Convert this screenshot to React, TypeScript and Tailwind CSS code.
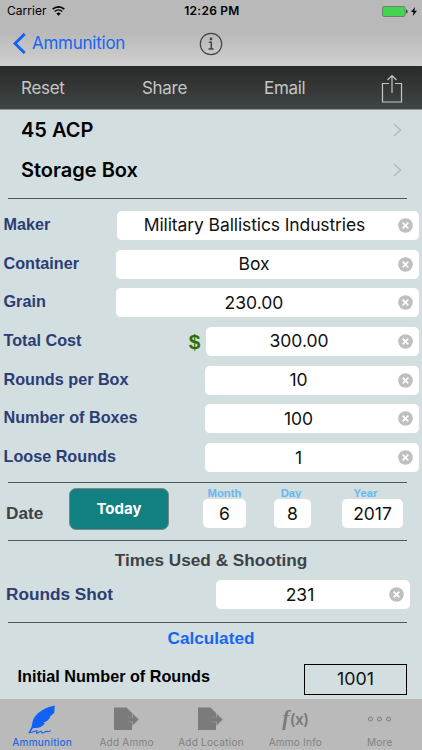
import type { ReactNode } from "react";

interface Field {
  label: string;
  value: string;
  fieldClass: string;
  money?: boolean;
}

const fields: Field[] = [
  {
    label: "Maker",
    value: "Military Ballistics Industries",
    fieldClass: "w-[304px] tracking-[-0.11px]",
  },
  { label: "Container", value: "Box", fieldClass: "w-[305px]" },
  { label: "Grain", value: "230.00", fieldClass: "w-[305px]" },
  {
    label: "Total Cost",
    value: "300.00",
    fieldClass: "w-[215px]",
    money: true,
  },
  { label: "Rounds per Box", value: "10", fieldClass: "w-[216px]" },
  { label: "Number of Boxes", value: "100", fieldClass: "w-[216px]" },
  { label: "Loose Rounds", value: "1", fieldClass: "w-[216px]" },
];

const dateParts = [
  { label: "Month", value: "6", boxClass: "w-[45px]", labelClass: "" },
  { label: "Day", value: "8", boxClass: "w-[39px]", labelClass: "pr-[3px]" },
  {
    label: "Year",
    value: "2017",
    boxClass: "ml-[3px] w-[63px]",
    labelClass: "pr-[11px]",
  },
];

const Divider = () => <div className="ml-2 h-px w-[399px] bg-[#50585b]" />;

const ClearIcon = () => (
  <svg width="15" height="15" viewBox="0 0 15 15" className="shrink-0">
    <circle cx="7.5" cy="7.5" r="7.3" fill="#bfbfc1" />
    <path d="M4.7 4.7l5.6 5.6M10.3 4.7l-5.6 5.6" stroke="#fff" strokeWidth="1.7" />
  </svg>
);

const TextField = ({
  value,
  className,
}: {
  value: string;
  className: string;
}) => (
  <div
    className={`flex h-[31px] shrink-0 items-center rounded-[6px] border border-[#d6dee0] bg-white pr-[6px] font-['Inter',sans-serif] text-[17.5px] text-[#111] ${className}`}
  >
    <span className="flex-1 whitespace-nowrap pr-[5px] text-center">
      {value}
    </span>
    <ClearIcon />
  </div>
);

const ListRow = ({ title }: { title: string }) => (
  <div className="flex h-10 items-center justify-between pl-[21px] pr-5">
    <span className="font-['Inter',sans-serif] text-[20px] font-semibold text-black">
      {title}
    </span>
    <svg width="9" height="14" viewBox="0 0 9 14" fill="none">
      <path d="M1 1l6.5 6L1 13" stroke="#b5babd" strokeWidth="1.6" />
    </svg>
  </div>
);

const ExportIcon = () => (
  <svg width="26" height="24" viewBox="0 0 26 24" fill="#7b7b7b">
    <path d="M0 .5h12.500l5.500 5.500v17H0z" />
    <path
      d="M13.500 10.200h5V6.500l6.300 6-6.300 6v-3.700h-5"
      stroke="#9b9b9b"
      strokeWidth="0.6"
    />
  </svg>
);

const QuillIcon = () => (
  <svg width="28" height="29" viewBox="0 0 28 29">
    <path
      d="M26.700.5C19 2 12 5.500 7.500 11 4 15 4.500 19 3.500 22L.3 28h1.400L5.200 23c5 .3 9-.8 11.800-5l-1.800-.3c3.500-1 5.500-3 7.500-6l-1.500-.3c2.500-1 4-2.300 5.200-4.200z"
      fill="#0f62f5"
    />
    <path
      d="M1 28c3.500-.2 7-3 8-2.200.8.900-1.500 2.400-.2 2.500 1.800 0 3-2.300 4.300-2 1 .3 0 1.700 1.500 1.700 1.600 0 2.600-1.800 4-1.600 1.200.2 2 .7 4.400-.8"
      fill="none"
      stroke="#0f62f5"
      strokeWidth="1.1"
    />
  </svg>
);

const Tab = ({
  label,
  icon,
  active = false,
}: {
  label: string;
  icon: ReactNode;
  active?: boolean;
}) => (
  <div
    className={`flex w-[84.4px] flex-col items-center font-['Inter',sans-serif] text-[10px] tracking-[0.25px] ${
      active ? "font-medium text-[#2467df]" : "text-[#818181]"
    }`}
  >
    <div className="flex h-[37px] items-center pt-[3px]">{icon}</div>
    <span className="whitespace-nowrap leading-[13px]">{label}</span>
  </div>
);

const App = () => {
  return (
    <div className="flex h-[750px] w-[422px] flex-col overflow-hidden bg-[#d2dee0] font-['Liberation_Sans',Arial,sans-serif]">
      <header className="h-[66px] shrink-0 bg-linear-to-b from-[#b9b9b9] from-50% to-[#d0d0d0] font-['Inter',sans-serif]">
        <div className="grid h-[22px] grid-cols-3 items-center pl-[7px] pr-[5px] text-[12px] text-black">
          <div className="flex items-center gap-[5px]">
            <span className="tracking-[0.05px]">Carrier</span>
            <svg width="13" height="10" viewBox="0 0 13 10" fill="none" stroke="#000">
              <path d="M.7 3.200a8.400 8.400 0 0 1 11.600 0" strokeWidth="1.7" />
              <path d="M2.800 5.500a5.400 5.400 0 0 1 7.400 0" strokeWidth="1.600" />
              <path d="M6.500 9.800L4.300 7.500a3.200 3.200 0 0 1 4.400 0z" fill="#000" stroke="none" />
            </svg>
          </div>
          <span className="whitespace-nowrap text-center font-semibold tracking-[0.25px]">
            12:26 PM
          </span>
          <div className="flex items-center justify-end gap-[3px]">
            <svg width="26" height="11" viewBox="0 0 26 11">
              <rect x=".5" y=".5" width="22.500" height="10" rx="1.500" fill="#43d551" stroke="#6f7f70" />
              <path d="M24 3.500c2 .5 2 3.500 0 4z" fill="#333" />
            </svg>
            <svg width="6" height="9" viewBox="0 0 6 9">
              <path d="M4 0L0 5h2.500L1.700 9 6 3.700H3.300z" />
            </svg>
          </div>
        </div>
        <div className="grid h-[43px] grid-cols-3 items-center px-[13px]">
          <div className="flex items-center gap-[6px]">
            <svg width="13" height="21" viewBox="0 0 13 21" fill="none">
              <path d="M11.700 1L2 10.500l9.700 9.500" stroke="#0f62f5" strokeWidth="2.900" />
            </svg>
            <span className="text-[17px] tracking-[-0.25px] text-[#1767ee]">
              Ammunition
            </span>
          </div>
          <svg width="24" height="24" viewBox="0 0 24 24" fill="none" className="justify-self-center">
            <circle cx="12" cy="12" r="10.700" stroke="#444" strokeWidth="1.200" />
            <circle cx="12" cy="7" r="1.400" fill="#444" />
            <path d="M9.800 10.300h2.500v6.500M9.500 17h5.200" stroke="#444" strokeWidth="1.500" />
          </svg>
        </div>
      </header>

      <div className="flex h-[44px] shrink-0 items-center border-b border-[#8b9294] bg-linear-to-b from-[#292a2a] to-[#414545] pt-[2px] font-['Inter',sans-serif] text-[17px] tracking-[-0.3px] text-[#c4c6c6]">
        <span className="w-[121px] pl-[21px]">Reset</span>
        <span className="w-[122px] pl-[21px]">Share</span>
        <span className="w-[138px] pl-[21px]">Email</span>
        <svg width="22" height="30" viewBox="0 0 22 30" fill="none" stroke="#c4c6c6" strokeWidth="1.200">
          <path d="M8 9.500H1.500v18.500h19V9.500H14M11 19V2M6.500 6L11 1.500 15.500 6" />
        </svg>
      </div>

      <main className="h-[589px] shrink-0">
        <ListRow title="45 ACP" />
        <ListRow title="Storage Box" />
        <div className="pt-2">
          <Divider />
        </div>

        <div className="flex flex-col gap-[7.700px] pt-[11px]">
          {fields.map((field) => (
            <div
              key={field.label}
              className="flex h-[31px] items-center justify-between pl-[3.500px] pr-[2.500px]"
            >
              <span className="pb-[3px] text-[16.200px] font-bold text-[#2b3d74]">
                {field.label}
              </span>
              <div className="flex items-center gap-1">
                {field.money && (
                  <span className="text-[21px] font-bold leading-none text-[#2c7005]">
                    $
                  </span>
                )}
                <TextField value={field.value} className={field.fieldClass} />
              </div>
            </div>
          ))}
        </div>

        <div className="pt-[9px]">
          <Divider />
        </div>
        <div className="flex h-[57px] items-start pl-[6px]">
          <span className="w-[63px] pt-[18px] text-[17.200px] font-bold text-[#3f4244]">
            Date
          </span>
          <button className="mt-[5px] h-[42px] w-[100px] rounded-[7px] border-[1.500px] border-[#79898b] bg-[#128080] font-['Inter',sans-serif] text-[15px] font-bold text-white">
            Today
          </button>
          <div className="ml-[33px] flex gap-[26px] pt-[5px]">
            {dateParts.map((part) => (
              <div key={part.label} className="flex flex-col items-center">
                <span
                  className={`h-[10px] text-[11.300px] font-bold leading-[10px] text-[#69b8ee] ${part.labelClass}`}
                >
                  {part.label}
                </span>
                <div
                  className={`flex h-[31px] items-center justify-center rounded-[6px] border border-[#d6dee0] bg-white font-['Inter',sans-serif] text-[17.500px] text-[#111] ${part.boxClass}`}
                >
                  {part.value}
                </div>
              </div>
            ))}
          </div>
        </div>
        <Divider />

        <h2 className="h-[38px] text-center text-[17.200px] font-bold leading-[38px] text-[#3f4244]">
          Times Used &amp; Shooting
        </h2>
        <div className="flex h-[31px] items-center justify-between pl-[6px] pr-[11px]">
          <span className="text-[17.200px] font-bold text-[#2b3d74]">
            Rounds Shot
          </span>
          <TextField value="231" className="w-[196px]" />
        </div>
        <div className="pt-[12px]">
          <Divider />
        </div>
        <h2 className="h-[41px] text-center text-[17.200px] font-bold leading-[31px] text-[#1767ee]">
          Calculated
        </h2>
        <div className="flex h-[31px] items-center justify-between pl-[17.500px] pr-[15px]">
          <span className="pb-[6px] text-[16.200px] font-bold text-black">
            Initial Number of Rounds
          </span>
          <div className="flex h-[31px] w-[103px] items-center justify-center border border-black font-['Inter',sans-serif] text-[17.800px] text-[#111]">
            1001
          </div>
        </div>
      </main>

      <nav className="flex h-[51px] shrink-0 bg-[#bababa]">
        <Tab label="Ammunition" icon={<QuillIcon />} active />
        <Tab label="Add Ammo" icon={<ExportIcon />} />
        <Tab label="Add Location" icon={<ExportIcon />} />
        <Tab
          label="Ammo Info"
          icon={
            <span className="text-[15.500px] font-semibold tracking-[-0.6px] text-[#7b7b7b]">
              <i className="pr-px font-['Liberation_Serif',serif] text-[21px] font-bold">
                f
              </i>
              (x)
            </span>
          }
        />
        <Tab
          label="More"
          icon={
            <svg width="24" height="6" viewBox="0 0 24 6" fill="none" stroke="#7b7b7b">
              <circle cx="2.500" cy="3" r="2" />
              <circle cx="11.500" cy="3" r="2" />
              <circle cx="20.500" cy="3" r="2" />
            </svg>
          }
        />
      </nav>
    </div>
  );
};

export default App;
